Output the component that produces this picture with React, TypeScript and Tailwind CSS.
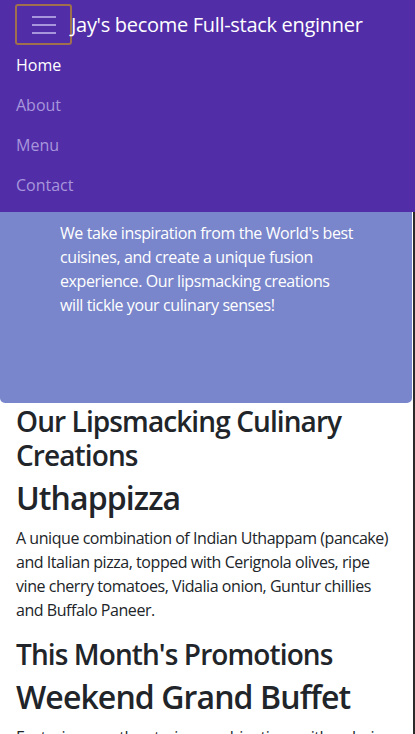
import React from "react";

export default function App() {
  const font = { fontFamily: '"Open Sans", "Noto Sans", sans-serif' };
  return (
    <div className="w-[415px] h-[734px] overflow-hidden bg-white" style={font}>
      <nav className="bg-[#512da8] pt-[4px] pb-[7px]">
        <div className="flex items-center h-[41px]">
          <button className="ml-[15px] w-[57px] h-[41px] border-[2px] border-[#a0704c] rounded-[3px] flex flex-col items-center justify-center gap-[6px] shrink-0">
            <span className="block w-[24px] h-[2px] bg-[#a896dc]" />
            <span className="block w-[24px] h-[2px] bg-[#a896dc]" />
            <span className="block w-[24px] h-[2px] bg-[#a896dc]" />
          </button>
          <span className="ml-[-1px] text-white text-[20px] leading-none whitespace-nowrap tracking-[-0.3px]">
            Jay's become Full-stack enginner
          </span>
        </div>
        <ul className="pl-[16px]">
          <li className="h-[40px] flex items-center text-[16px] text-white">Home</li>
          <li className="h-[40px] flex items-center text-[16px] text-[#a896dc]">About</li>
          <li className="h-[40px] flex items-center text-[16px] text-[#a896dc]">Menu</li>
          <li className="h-[40px] flex items-center text-[16px] text-[#a896dc]">Contact</li>
        </ul>
      </nav>
      <div className="border-r-[2px] border-[#2b2b2b] pr-[1px] h-[522px]">
        <div className="bg-[#7986cb] h-[191px] rounded-b-[5px] pt-[9px] pl-[60px]">
          <p className="text-white text-[16px] leading-[24px] tracking-[-0.4px]">
            <span className="block">We take inspiration from the World's best</span>
            <span className="block">cuisines, and create a unique fusion</span>
            <span className="block">experience. Our lipsmacking creations</span>
            <span className="block">will tickle your culinary senses!</span>
          </p>
        </div>
        <div className="px-[16px] pt-[2px] text-[#212529]">
          <h2 className="text-[28px] leading-[33.6px] font-semibold tracking-[-0.9px]">
            Our Lipsmacking Culinary Creations
          </h2>
          <h1 className="mt-[7px] text-[32px] leading-[38.4px] font-semibold tracking-[-0.9px]">Uthappizza</h1>
          <p className="mt-[8px] text-[16px] leading-[24px] tracking-[-0.45px]">
            <span className="block whitespace-nowrap">A unique combination of Indian Uthappam (pancake)</span>
            <span className="block whitespace-nowrap">and Italian pizza, topped with Cerignola olives, ripe</span>
            <span className="block whitespace-nowrap">vine cherry tomatoes, Vidalia onion, Guntur chillies</span>
            <span className="block whitespace-nowrap">and Buffalo Paneer.</span>
          </p>
          <h2 className="mt-[16px] text-[28px] leading-[33.6px] font-semibold tracking-[-0.9px]">
            This Month's Promotions
          </h2>
          <h1 className="mt-[7px] text-[32px] leading-[38.4px] font-semibold tracking-[-0.9px]">Weekend Grand Buffet</h1>
          <p className="mt-[8px] text-[16px] leading-[24px] tracking-[-0.45px]">
            Featuring mouthwatering combinations with a choice of five different salads, six enticing appetizers, six
            main entrees and five choicest desserts.
          </p>
        </div>
      </div>
    </div>
  );
}
